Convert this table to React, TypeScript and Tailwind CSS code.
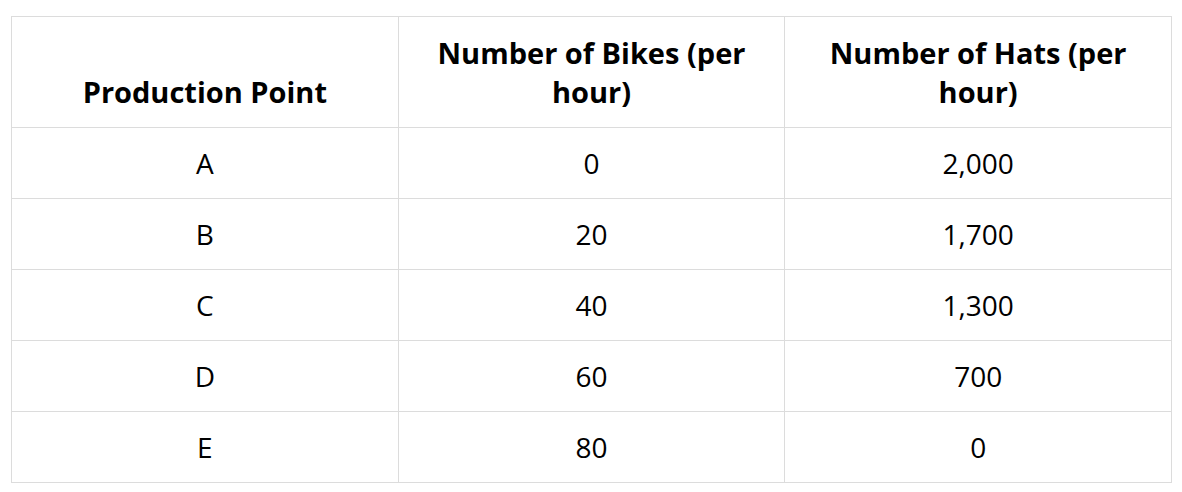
const rows = [
  { point: "A", bikes: "0", hats: "2,000" },
  { point: "B", bikes: "20", hats: "1,700" },
  { point: "C", bikes: "40", hats: "1,300" },
  { point: "D", bikes: "60", hats: "700" },
  { point: "E", bikes: "80", hats: "0" },
];

const headers = ["Production Point", "Number of Bikes (per hour)", "Number of Hats (per hour)"];

export default function App() {
  return (
    <div
      className="w-[1182px] h-[492px] bg-white pl-[11px] pt-[16px] text-black"
      style={{ fontFamily: '"Open Sans", sans-serif' }}
    >
      <table className="w-[1161px] table-fixed border-collapse text-[28px]">
        <thead>
          <tr>
            {headers.map((h) => (
              <th
                key={h}
                className="border border-[#dcdcdc] px-[36px] py-[16px] align-bottom text-center font-bold leading-[39px] text-[29px]"
              >
                {h}
              </th>
            ))}
          </tr>
        </thead>
        <tbody>
          {rows.map((r) => (
            <tr key={r.point} className="leading-[38px]">
              <td className="border border-[#dcdcdc] py-[16px] text-center">{r.point}</td>
              <td className="border border-[#dcdcdc] py-[16px] text-center">{r.bikes}</td>
              <td className="border border-[#dcdcdc] py-[16px] text-center">{r.hats}</td>
            </tr>
          ))}
        </tbody>
      </table>
    </div>
  );
}
